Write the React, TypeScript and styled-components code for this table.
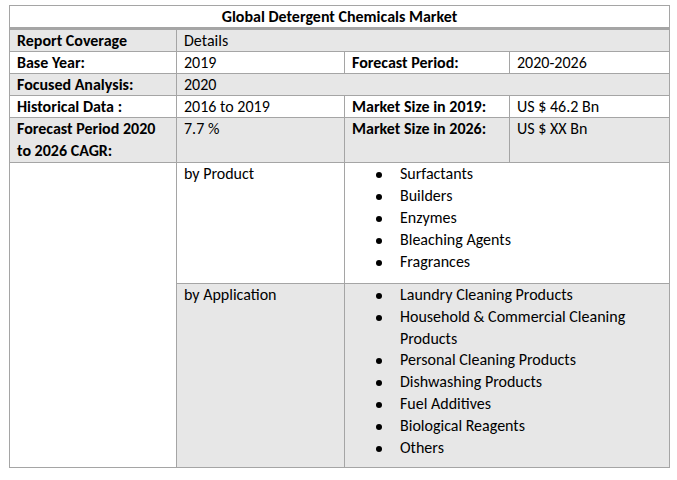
import React from "react";
import styled, { createGlobalStyle } from "styled-components";

const Global = createGlobalStyle`
  html, body { margin: 0; padding: 0; background: #ffffff; }
  body { padding: 5px 0 0 9px; font-family: Carlito, Calibri, Lato, "Liberation Sans", sans-serif; color: #000; }
`;

const Table = styled.table`
  border-collapse: collapse;
  table-layout: fixed;
  width: 660px;
  font-size: 16px;
  line-height: 21px;
`;

const Row = styled.tr<{ $tall?: boolean }>`
  line-height: ${(p) => (p.$tall ? "22px" : "21px")};
`;

const Cell = styled.td<{ $gray?: boolean; $bold?: boolean; $center?: boolean; $thickBottom?: boolean }>`
  border: 1px solid #a5a5a5;
  border-bottom: ${(p) => (p.$thickBottom ? "3px solid #a5a5a5" : "1px solid #a5a5a5")};
  background: ${(p) => (p.$gray ? "#e7e7e7" : "#ffffff")};
  font-weight: ${(p) => (p.$bold ? 700 : 400)};
  text-align: ${(p) => (p.$center ? "center" : "left")};
  padding: 0 7px;
  vertical-align: top;
`;

const List = styled.ul<{ $tight?: boolean }>`
  margin: 0;
  padding: 0 0 ${(p) => (p.$tight ? "9px" : "10px")} 48px;
  list-style: none;
  line-height: ${(p) => (p.$tight ? "21.8px" : "22px")};
`;

const Item = styled.li`
  position: relative;
  &::before {
    content: "";
    position: absolute;
    left: -24px;
    top: 9px;
    width: 6px;
    height: 6px;
    border-radius: 50%;
    background: #000;
  }
`;

const products = ["Surfactants", "Builders", "Enzymes", "Bleaching Agents", "Fragrances"];
const applications = [
  "Laundry Cleaning Products",
  "Household & Commercial Cleaning Products",
  "Personal Cleaning Products",
  "Dishwashing Products",
  "Fuel Additives",
  "Biological Reagents",
  "Others",
];

export default function App() {
  return (
    <>
      <Global />
      <Table>
        <colgroup>
          <col style={{ width: 167 }} />
          <col style={{ width: 168 }} />
          <col style={{ width: 165 }} />
          <col style={{ width: 160 }} />
        </colgroup>
        <tbody>
          <Row>
            <Cell colSpan={4} $bold $center $thickBottom>
              Global Detergent Chemicals Market
            </Cell>
          </Row>
          <Row>
            <Cell $gray $bold>Report Coverage</Cell>
            <Cell $gray colSpan={3}>Details</Cell>
          </Row>
          <Row>
            <Cell $bold>Base Year:</Cell>
            <Cell>2019</Cell>
            <Cell $bold>Forecast Period:</Cell>
            <Cell>2020-2026</Cell>
          </Row>
          <Row>
            <Cell $gray $bold>Focused Analysis:</Cell>
            <Cell $gray colSpan={3}>2020</Cell>
          </Row>
          <Row>
            <Cell $bold>Historical Data :</Cell>
            <Cell>2016 to 2019</Cell>
            <Cell $bold>Market Size in 2019:</Cell>
            <Cell>US $ 46.2 Bn</Cell>
          </Row>
          <Row $tall>
            <Cell $gray $bold>Forecast Period 2020 to 2026 CAGR:</Cell>
            <Cell $gray>7.7 %</Cell>
            <Cell $gray $bold>Market Size in 2026:</Cell>
            <Cell $gray>US $ XX Bn</Cell>
          </Row>
          <Row>
            <Cell rowSpan={2} />
            <Cell>by Product</Cell>
            <Cell colSpan={2}>
              <List>
                {products.map((p) => (
                  <Item key={p}>{p}</Item>
                ))}
              </List>
            </Cell>
          </Row>
          <Row>
            <Cell $gray>by Application</Cell>
            <Cell $gray colSpan={2}>
              <List $tight>
                {applications.map((p) => (
                  <Item key={p}>{p}</Item>
                ))}
              </List>
            </Cell>
          </Row>
        </tbody>
      </Table>
    </>
  );
}
